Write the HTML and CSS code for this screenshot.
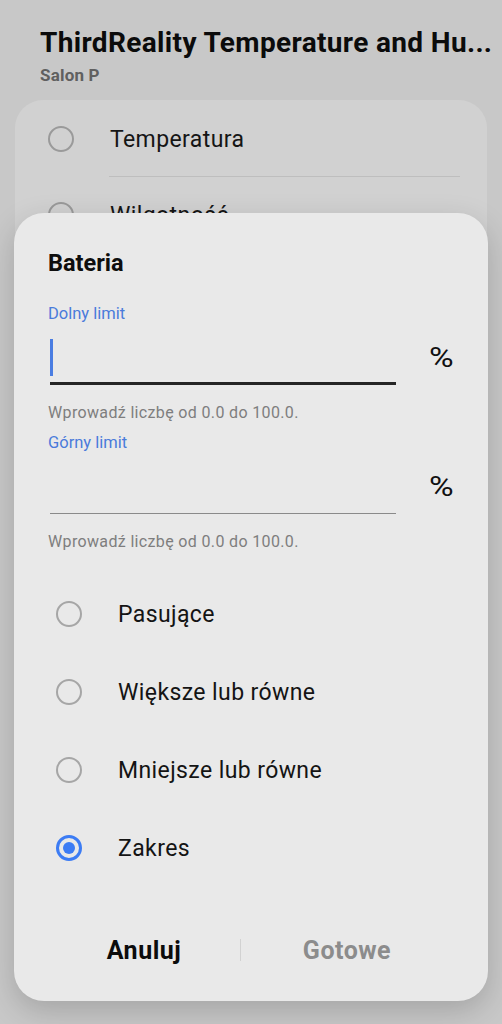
FILE: index.html
```html
<!DOCTYPE html>
<html lang="pl">
<head>
<meta charset="utf-8">
<title>Bateria</title>
<link rel="stylesheet" href="styles.css">
</head>
<body>
<div class="page">
  <header class="head">
    <h1 class="title">ThirdReality Temperature and Hu...</h1>
    <div class="subtitle">Salon P</div>
  </header>
  <section class="card">
    <div class="card-row card-row-first">
      <span class="radio radio-bg"></span>
      <span class="card-label">Temperatura</span>
    </div>
    <div class="card-row">
      <span class="radio radio-bg"></span>
      <span class="card-label">Wilgotność</span>
    </div>
  </section>
</div>

<div class="dialog">
  <h2 class="dialog-title">Bateria</h2>

  <div class="field">
    <div class="field-label">Dolny limit</div>
    <div class="field-row">
      <div class="input input-focus"><span class="caret"></span></div>
      <span class="unit">%</span>
    </div>
    <div class="helper">Wprowadź liczbę od 0.0 do 100.0.</div>
  </div>

  <div class="field">
    <div class="field-label">Górny limit</div>
    <div class="field-row">
      <div class="input"></div>
      <span class="unit">%</span>
    </div>
    <div class="helper">Wprowadź liczbę od 0.0 do 100.0.</div>
  </div>

  <ul class="options">
    <li class="option"><span class="radio"></span><span class="option-label">Pasujące</span></li>
    <li class="option"><span class="radio"></span><span class="option-label">Większe lub równe</span></li>
    <li class="option"><span class="radio"></span><span class="option-label">Mniejsze lub równe</span></li>
    <li class="option"><span class="radio radio-on"></span><span class="option-label">Zakres</span></li>
  </ul>

  <div class="footer">
    <button class="btn btn-cancel">Anuluj</button>
    <span class="sep"></span>
    <button class="btn btn-done">Gotowe</button>
  </div>
</div>
</body>
</html>
```

FILE: styles.css
```css
* { box-sizing: border-box; }
html, body {
  margin: 0;
  padding: 0;
}
body {
  width: 502px;
  height: 1024px;
  overflow: hidden;
  background: #c8c8c8;
  font-family: Roboto, "Noto Sans", sans-serif;
  color: #111;
  position: relative;
}

.head {
  padding: 26px 0 0 40px;
}
.title {
  margin: 0;
  font-size: 28px;
  line-height: 34px;
  font-weight: 700;
  color: #0b0b0b;
  white-space: nowrap;
  letter-spacing: 0.35px;
}
.subtitle {
  margin-top: 5px;
  font-size: 17px;
  line-height: 20px;
  font-weight: 700;
  color: #606060;
  letter-spacing: 0.2px;
}

.card {
  margin: 15px 15px 0 15px;
  height: 140px;
  background: #d1d1d1;
  border-radius: 28px 28px 0 0;
  padding: 1px 27px 0 33px;
  overflow: hidden;
}
.card-row {
  display: flex;
  align-items: center;
  height: 76px;
}
.card-row-first {
  background: linear-gradient(#bebebe, #bebebe) no-repeat 61px 75px / calc(100% - 61px) 1px;
}
.card-label {
  margin-left: 36px;
  font-size: 23px;
  letter-spacing: 0.4px;
  color: #151515;
}

.radio {
  flex: none;
  width: 26px;
  height: 26px;
  border-radius: 50%;
  border: 2px solid #a6a6a6;
  display: inline-block;
  position: relative;
}
.radio-bg { border-color: #9a9a9a; }
.radio-on {
  border: 3px solid #3c7cf4;
}
.radio-on::after {
  content: "";
  position: absolute;
  left: 4px;
  top: 4px;
  width: 12px;
  height: 12px;
  border-radius: 50%;
  background: #3c7cf4;
}

.dialog {
  position: absolute;
  left: 14px;
  top: 213px;
  width: 474px;
  background: #e9e9e9;
  border-radius: 30px;
  box-shadow: 0 10px 30px rgba(0, 0, 0, 0.18);
  padding: 36px 34px 0 34px;
}
.dialog-title {
  margin: 0;
  font-size: 23.5px;
  line-height: 28px;
  font-weight: 700;
  color: #0e0e0e;
}

.field {
  margin-top: 27px;
  margin-bottom: 10px;
}
.field + .field { margin-top: 0; }
.field-label {
  font-size: 16.5px;
  line-height: 20px;
  color: #4a7bdb;
}
.field-row {
  display: flex;
  align-items: flex-start;
  height: 61px;
}
.input {
  width: 346px;
  height: 61px;
  margin-left: 2px;
  border-bottom: 1px solid #8a8a8a;
  padding-top: 15px;
}
.input-focus {
  border-bottom: 3px solid #252525;
}
.caret {
  display: block;
  width: 3px;
  height: 37px;
  background: #4a7de2;
}
.unit {
  margin-left: 33px;
  margin-top: 18px;
  font-size: 28px;
  line-height: 32px;
  color: #111;
  display: inline-block;
  transform: scaleX(1.2);
  transform-origin: left center;
}
.helper {
  margin-top: 18px;
  font-size: 16px;
  line-height: 20px;
  letter-spacing: 0.35px;
  color: #7e7e7e;
}

.options {
  list-style: none;
  margin: 23px 0 0 0;
  padding: 0 0 0 8px;
}
.option {
  display: flex;
  align-items: center;
  height: 78px;
}
.option-label {
  margin-left: 36px;
  font-size: 23px;
  letter-spacing: 0.4px;
  color: #141414;
}

.footer {
  display: grid;
  grid-template-columns: 192px 1px 212px;
  align-items: center;
  height: 114px;
  padding: 35px 0 23px 0;
}
.btn {
  background: none;
  border: 0;
  padding: 0;
  height: 56px;
  font-family: Roboto, "Noto Sans", sans-serif;
  font-size: 25px;
  font-weight: 700;
  letter-spacing: 0.5px;
  cursor: pointer;
}
.btn-cancel { color: #0c0c0c; }
.btn-done { color: #8c8c8c; }
.sep {
  width: 1px;
  height: 22px;
  background: #d2d2d2;
}
```
